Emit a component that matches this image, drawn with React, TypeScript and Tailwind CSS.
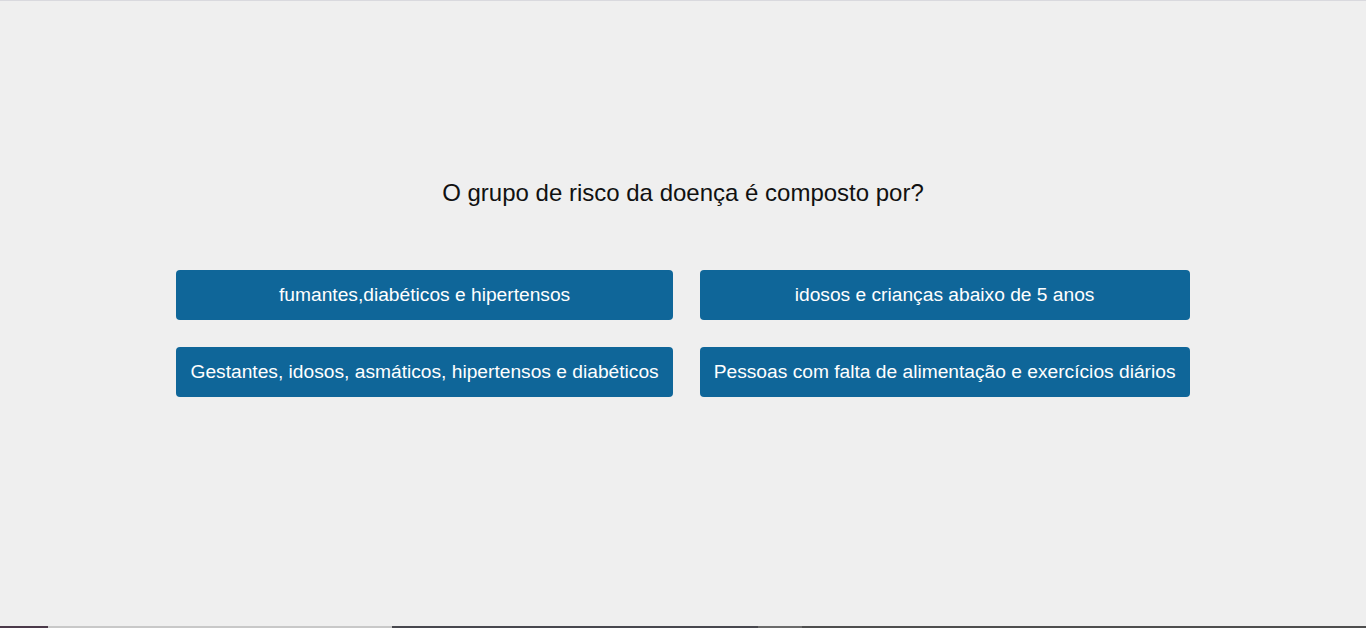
import React from "react";

const answers = [
  "fumantes,diabéticos e hipertensos",
  "idosos e crianças abaixo de 5 anos",
  "Gestantes, idosos, asmáticos, hipertensos e diabéticos",
  "Pessoas com falta de alimentação e exercícios diários",
];

export default function App() {
  return (
    <div
      className="h-[628px] w-[1366px] flex flex-col bg-[#efefef] overflow-hidden"
      style={{ fontFamily: '"Liberation Sans", Arial, sans-serif' }}
    >
      <div className="h-px bg-[#d9d9de]" />
      <div className="flex flex-col items-center pt-[178px]">
        <h1 className="text-[24px] leading-[28px] text-[#111]">
          O grupo de risco da doença é composto por?
        </h1>
        <div className="mt-[63px] grid grid-cols-[auto_auto] justify-center gap-[27px]">
          {answers.map((a) => (
            <button
              key={a}
              className="h-[50px] px-[14px] rounded-[4px] bg-[#0f6699] text-white text-[19.2px] whitespace-nowrap"
            >
              {a}
            </button>
          ))}
        </div>
      </div>
      <div className="mt-auto flex h-[2px]">
        <div className="w-[48px] bg-[#4b3a4a]" />
        <div className="w-[344px] bg-[#c8c8c8]" />
        <div className="w-[366px] bg-[#48484e]" />
        <div className="w-[44px] bg-[#6b6b6b]" />
        <div className="flex-1 bg-[#4e4e4e]" />
      </div>
    </div>
  );
}
